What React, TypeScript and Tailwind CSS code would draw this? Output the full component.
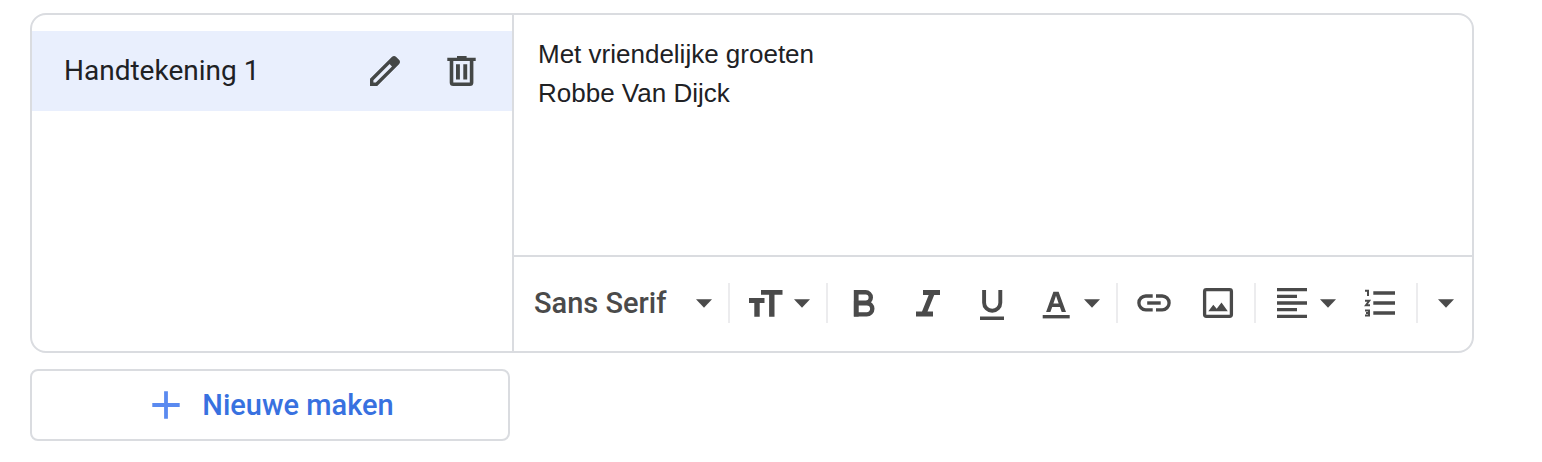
import React, { useState } from 'react';

interface IconProps {
  children: React.ReactNode;
}

const Icon: React.FC<IconProps> = ({ children }) => (
  <svg viewBox="0 0 40 40" className="w-10 h-10 shrink-0" fill="currentColor" aria-hidden="true">
    {children}
  </svg>
);

const Caret: React.FC = () => (
  <svg viewBox="0 0 16 40" className="w-4 h-10 shrink-0" fill="currentColor" aria-hidden="true">
    <path d="M0 16.3h16l-8 8.4z" />
  </svg>
);

const Separator: React.FC = () => <div className="w-0.5 h-10 shrink-0 bg-[#ececee]" />;

interface ToolButtonProps {
  label: string;
  menu?: boolean;
  children: React.ReactNode;
}

const ToolButton: React.FC<ToolButtonProps> = ({ label, menu, children }) => (
  <button type="button" aria-label={label} aria-haspopup={menu ? 'menu' : undefined} className="flex items-center gap-2 shrink-0">
    <Icon>{children}</Icon>
    {menu && <Caret />}
  </button>
);

const Toolbar: React.FC = () => {
  const [font, setFont] = useState('Sans Serif');

  return (
    <div className="flex items-center pt-[26px] pb-7 border-t-2 border-[#dadce0] text-[#4a4a4a]">
      <div className="relative w-[214px] shrink-0">
        <select
          aria-label="Lettertype"
          value={font}
          onChange={(e) => setFont(e.target.value)}
          className="block appearance-none w-full h-10 pl-5 pr-10 bg-transparent font-[Roboto,sans-serif] font-medium text-[29px] leading-10 focus:outline-none"
        >
          <option>Sans Serif</option>
        </select>
        <span className="absolute right-4 top-0 pointer-events-none">
          <Caret />
        </span>
      </div>
      <Separator />
      <div className="flex px-4">
        <ToolButton label="Grootte" menu>
          <path d="M15 7h21.5v4.7h-8v22h-5.4v-22H15z" />
          <path d="M3 15.1h15.5v4.9h-4.8v13.7H8.3V20H3z" />
        </ToolButton>
      </div>
      <Separator />
      <div className="flex gap-6 px-4">
        <ToolButton label="Vet">
          <path
            d="M12.1 9.2h9.5a5.2 5.2 0 0 1 0 10.4h-9.5M12.1 20.2h10.6a5.6 5.6 0 0 1 0 11.2H12.1z"
            fill="none"
            stroke="currentColor"
            strokeWidth="4.4"
          />
          <path d="M9.8 7h4.8v26.6H9.8z" />
        </ToolButton>
        <ToolButton label="Cursief">
          <path d="M15 7h17v5.1h-5.8l-6.7 16.3H25v5.2H8v-5.2h6l6.7-16.3H15z" />
        </ToolButton>
        <ToolButton label="Onderstrepen">
          <path d="M12.1 7v12.7a8.1 8.1 0 0 0 16.2 0V7" fill="none" stroke="currentColor" strokeWidth="3.9" />
          <path d="M8 33.5h24V37H8z" />
        </ToolButton>
        <ToolButton label="Tekstkleur" menu>
          <path fillRule="evenodd" d="M17.4 8.7h5.2L30 29h-4.3l-1.8-5h-7.7l-1.8 5h-4.3zM17.4 20.5h5.3L20 12.8z" />
          <path d="M6.7 32h27v3.4h-27z" />
        </ToolButton>
      </div>
      <Separator />
      <div className="flex gap-6 px-4">
        <ToolButton label="Link">
          <path
            d="M18.7 13h-6.9a6.9 6.9 0 0 0 0 13.8h6.9M22 13h6.2a6.9 6.9 0 0 1 0 13.8H22"
            fill="none"
            stroke="currentColor"
            strokeWidth="3.3"
          />
          <path d="M13.2 18.3h13.5v3.4H13.2z" />
        </ToolButton>
        <ToolButton label="Afbeelding">
          <rect x="6.6" y="6.6" width="26.8" height="26.8" rx="1.8" fill="none" stroke="currentColor" strokeWidth="3.3" />
          <path d="M10.3 28.2l5-6.4 3.4 4 4.8-6.4 6.3 8.8z" />
        </ToolButton>
      </div>
      <Separator />
      <div className="flex gap-6 px-4">
        <ToolButton label="Uitlijnen" menu>
          <path d="M5 5h30v3.3H5zM5 11.7h20V15H5zM5 18.3h30v3.4H5zM5 25h20v3.3H5zM5 31.7h30V35H5z" />
        </ToolButton>
        <ToolButton label="Genummerde lijst">
          <path d="M13.3 8.3H35v3.4H13.3zM13.3 18.3H35v3.4H13.3zM13.3 28.3H35v3.4H13.3z" />
          <path
            d="M5 7.8h3V13M5 17.8h4.2L6 22.2h4M5 27.6h4v5H5M6 30.1h3"
            fill="none"
            stroke="currentColor"
            strokeWidth="2"
          />
        </ToolButton>
      </div>
      <Separator />
      <button type="button" aria-label="Meer opmaakopties" aria-haspopup="menu" className="ml-5">
        <Caret />
      </button>
    </div>
  );
};

const SignatureRow: React.FC<{ name: string }> = ({ name }) => (
  <li className="flex items-center h-20 pl-8 pr-[30px] bg-[#e9effd]">
    <span className="flex-1 font-[Roboto,sans-serif] text-[28px] leading-10 text-[#202124]">{name}</span>
    <div className="flex gap-9 text-[#444746]">
      <button type="button" aria-label="Naam bewerken">
        <Icon>
          <path
            fillRule="evenodd"
            d="M4 35v-7.2L25.8 6q2.3-2 4.4 0l2.8 2.8q2 2.1 0 4.4L11.2 35zM7.4 31.6h2.4L26 15.4 23.6 13 7.4 29.2z"
          />
        </Icon>
      </button>
      <button type="button" aria-label="Verwijderen">
        <Icon>
          <path d="M5.3 6.7H15V5h9.6v1.7h9.1V10H5.3z" />
          <path d="M9.5 9v22.6q0 1.7 1.7 1.7h16.7q1.7 0 1.7-1.7V9" fill="none" stroke="currentColor" strokeWidth="3.6" />
          <path d="M14 13.2h3.9v15.3H14zM21.3 13.2h3.9v15.3h-3.9z" />
        </Icon>
      </button>
    </div>
  </li>
);

export default function App() {
  const [signature, setSignature] = useState('Met vriendelijke groeten\nRobbe Van Dijck');

  return (
    <main className="pt-[13px] pl-[30px] pr-[68px] bg-white">
      <section className="flex border-2 border-[#dadce0] rounded-2xl overflow-hidden">
        <ul className="w-[480px] shrink-0 pt-4">
          <SignatureRow name="Handtekening 1" />
        </ul>
        <div className="flex-1 flex flex-col min-w-0 border-l-2 border-[#dadce0]">
          <textarea
            aria-label="Handtekening"
            value={signature}
            onChange={(e) => setSignature(e.target.value)}
            className="block w-full h-60 px-6 py-5 resize-none font-['Liberation_Sans',Arial,sans-serif] text-[26px] leading-[39px] text-[#202124] focus:outline-none"
          />
          <Toolbar />
        </div>
      </section>
      <button
        type="button"
        className="flex items-center justify-center gap-4 w-[480px] h-[72px] mt-4 border-2 border-[#dadce0] rounded-lg font-[Roboto,sans-serif] font-medium text-[29px] leading-10 text-[#3871e0]"
      >
        <svg viewBox="0 0 40 40" className="w-10 h-10" aria-hidden="true">
          <path d="M20 6.3v27.4M6.3 20h27.4" stroke="#5a8af0" strokeWidth="3.8" />
        </svg>
        Nieuwe maken
      </button>
    </main>
  );
}
